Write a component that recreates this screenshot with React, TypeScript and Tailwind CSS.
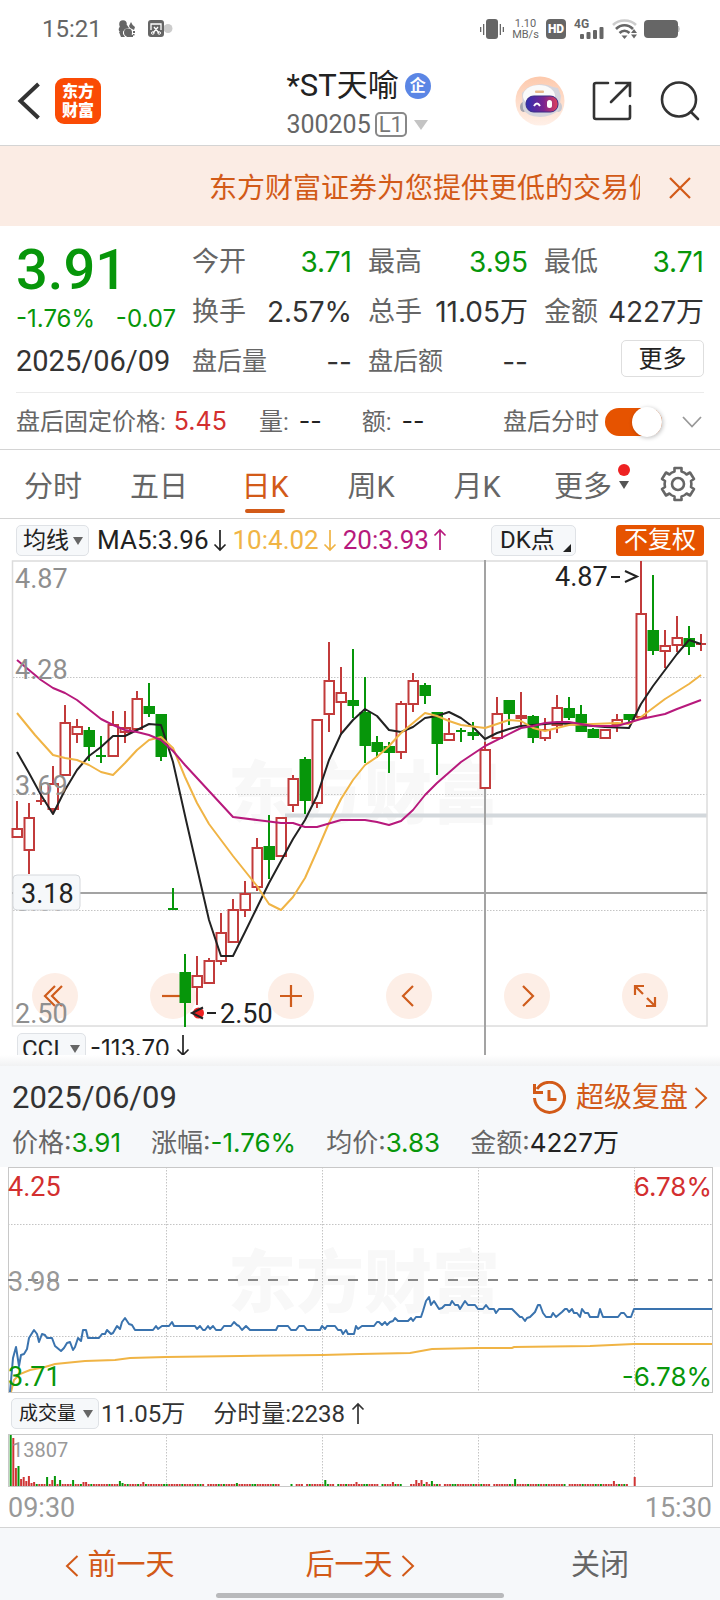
import { useState } from 'react';
import type { ReactNode } from 'react';

type Candle = [color: 'r' | 'g', high: number, top: number, bottom: number, low: number];

// One entry per trading day, in chart pixels (12px per day)
const CANDLES: Candle[] = [
  ['r', 241, 268, 278, 278], ['r', 243, 257, 291, 314], ['r', 225, 240, 242, 245], ['r', 206, 223, 250, 254],
  ['r', 145, 162, 216, 216], ['r', 159, 166, 175, 183], ['g', 167, 170, 187, 201], ['g', 176, 195, 197, 203],
  ['r', 151, 164, 197, 197], ['r', 151, 167, 173, 183], ['r', 131, 138, 170, 170], ['g', 123, 146, 154, 157],
  ['g', 154, 154, 197, 201], ['g', 328, 348, 350, 350], ['g', 394, 412, 443, 467], ['r', 396, 415, 428, 445],
  ['r', 398, 400, 424, 424], ['r', 353, 372, 402, 405], ['r', 339, 349, 383, 383], ['r', 321, 333, 351, 357],
  ['r', 278, 287, 328, 331], ['g', 255, 286, 300, 319], ['r', 257, 257, 297, 297], ['r', 215, 218, 246, 252],
  ['g', 197, 199, 241, 254], ['r', 159, 159, 244, 248], ['r', 82, 120, 155, 172], ['r', 107, 132, 143, 175],
  ['g', 89, 140, 146, 158], ['g', 117, 152, 186, 203], ['g', 176, 182, 192, 198], ['g', 182, 186, 193, 213],
  ['r', 141, 143, 193, 199], ['r', 113, 120, 145, 152], ['g', 123, 125, 136, 144], ['g', 152, 152, 184, 215],
  ['r', 158, 173, 181, 181], ['g', 168, 170, 172, 182], ['g', 162, 172, 176, 180], ['r', 182, 189, 229, 229],
  ['r', 137, 153, 179, 179], ['g', 140, 140, 154, 165], ['r', 132, 155, 159, 165], ['g', 155, 156, 178, 183],
  ['r', 158, 169, 179, 181], ['r', 135, 147, 166, 173], ['g', 137, 148, 158, 160], ['g', 145, 154, 172, 172],
  ['g', 168, 169, 178, 178], ['r', 169, 169, 179, 179], ['r', 154, 159, 165, 172], ['g', 154, 154, 160, 162],
  ['r', 1, 53, 158, 158], ['g', 15, 70, 91, 95], ['r', 70, 85, 92, 108], ['r', 56, 77, 86, 92],
  ['g', 66, 78, 87, 95], ['r', 74, 83, 85, 91],
];

const MA5 =
  '17,192 29,213 41,235 53,254 65,230 77,210 89,196 101,187 113,176 125,176 137,170 149,164 161,165 173,202 186,260 209,360 221,396 233,396 245,372 269,323 293,279 305,260 317,236 329,200 341,174 353,160 365,149 377,156 389,170 401,172 413,167 425,158 437,156 449,152 461,158 473,167 485,179 497,173 509,169 521,166 545,164 557,163 581,165 605,167 629,168 641,144 653,126 665,110 677,94 689,80 701,84';
const MA10 =
  '17,153 35,175 53,195 65,198 77,200 89,205 101,212 113,215 125,203 137,190 149,180 161,177 173,188 185,217 197,243 209,264 233,296 257,326 269,344 281,350 293,337 305,318 317,291 329,263 341,239 353,220 365,205 377,197 389,186 401,173 413,163 425,153 437,156 449,161 461,165 485,168 509,160 521,161 533,168 545,171 569,165 617,163 629,164 641,157 665,139 689,124 701,115';
const MA20 =
  '17,100 41,120 53,128 65,133 77,140 101,159 113,165 125,170 137,172 149,175 161,180 173,191 185,205 209,231 233,257 257,260 281,263 293,263 305,267 317,267 341,260 365,260 377,262 389,265 401,261 413,250 425,235 437,223 461,202 485,186 521,168 533,166 545,163 557,162 569,162 593,166 617,166 641,159 665,154 677,149 701,140';

const PRICE_LINE =
  '10,225 13,191 16,180 19,199 21,188 24,187 27,182 29,171 34,163 37,167 39,175 42,167 45,168 47,171 52,171 55,179 61,184 64,181 67,176 70,175 73,183 75,180 78,171 81,174 83,163 86,163 88,171 99,171 102,167 105,167 107,163 111,167 113,166 117,159 120,162 122,155 125,151 129,157 132,158 135,163 153,163 156,159 158,162 162,159 169,159 172,155 174,159 195,159 197,162 200,159 203,163 205,163 208,159 210,162 213,159 216,163 221,163 224,159 231,159 234,155 237,158 239,159 242,163 246,159 250,163 276,163 278,159 288,159 291,163 296,163 299,159 304,159 307,163 320,163 322,159 325,162 327,159 335,159 338,163 341,163 343,167 346,163 348,167 354,167 356,159 358,162 362,159 374,159 377,155 379,155 382,158 385,155 387,158 390,155 393,154 395,151 398,154 408,154 411,151 413,154 416,150 421,150 423,144 426,134 429,130 431,138 434,134 439,142 442,141 445,138 450,138 452,134 455,138 458,138 460,142 465,134 468,138 475,138 478,142 483,142 486,138 489,142 494,142 496,146 499,142 512,142 515,145 520,150 522,150 525,154 527,151 530,150 535,145 538,138 540,138 543,146 546,150 551,150 553,146 556,150 562,145 565,142 567,142 569,145 572,142 574,146 577,146 580,150 582,142 585,146 588,146 590,150 598,150 600,142 603,150 618,150 621,146 624,146 627,150 631,150 634,142 712,142';
const AVG_LINE =
  '11,225 14,213 20,207 30,203 45,200 55,197 85,194 115,193 130,191 166,190 240,189 322,188 360,187 410,186 432,182 478,181 512,181 514,180 590,179 634,177 712,177';

const VOLUME_PEAKS: Record<number, [number, 'r' | 'g']> = {
  0: [51, 'g'], 1: [48, 'r'], 2: [18, 'r'], 3: [20, 'g'], 4: [7, 'r'], 5: [9, 'r'], 6: [5, 'r'], 7: [10, 'r'],
  8: [3, 'r'], 9: [4, 'r'], 14: [9, 'g'], 16: [6, 'r'], 17: [10, 'g'], 19: [6, 'g'], 24: [6, 'g'], 28: [4, 'r'],
  29: [4, 'r'], 42: [5, 'g'], 43: [3, 'g'], 51: [4, 'r'], 87: [3, 'g'], 121: [6, 'g'], 133: [4, 'r'],
  147: [4, 'r'], 156: [6, 'r'], 157: [3, 'r'], 158: [6, 'r'], 160: [4, 'r'], 162: [5, 'g'], 194: [7, 'g'],
  232: [5, 'r'], 240: [9, 'r'],
};
const VOLUME_GAPS = [75, 104, 105, 106, 107, 109, 113, 125, 142, 151, 152, 153, 166, 185, 214, 238, 239];

const RED = '#c23b3b';
const GREEN = '#07960a';

function Arrow({ up = false, className = '' }: { up?: boolean; className?: string }) {
  return (
    <svg viewBox="0 0 14 24" className={`w-3.5 h-6 shrink-0 ${up ? 'rotate-180' : ''} ${className}`} fill="none" stroke="currentColor" strokeWidth="1.700">
      <path d="M7 2v20M1.500 16.500L7 22l5.500-5.500" />
    </svg>
  );
}

function Chevron({ left = false, className = '' }: { left?: boolean; className?: string }) {
  return (
    <svg viewBox="0 0 14 22" className={`w-3.5 h-[22px] shrink-0 ${className}`} fill="none" stroke="currentColor" strokeWidth="2">
      <path d={left ? 'M12.500 1L2 11l10.500 10' : 'M1.500 1L12 11L1.500 21'} />
    </svg>
  );
}

function Picker({ label, value, className }: { label: string; value: string; className: string }) {
  return (
    <label className="relative shrink-0">
      <span className="sr-only">{label}</span>
      <select className={`block h-[31px] rounded-[5px] border border-[#dfe2e6] bg-[#f6f8fa] text-[#222] appearance-none outline-none ${className}`}>
        <option>{value}</option>
      </select>
      <svg viewBox="0 0 10 8" className="absolute right-1.5 top-3 w-2.5 h-2 pointer-events-none">
        <path d="M0 0h10L5 8z" fill="#666" />
      </svg>
    </label>
  );
}

function StatusBar() {
  return (
    <div className="flex items-center h-[58px] pl-[42px] pr-[40px] text-[#666]">
      <span className="text-[24px] leading-none">15:21</span>
      <svg viewBox="0 0 18 18" className="ml-4 w-[18px] h-[18px]" fill="currentColor">
        <circle cx="5" cy="4" r="3.800" />
        <path d="M2 6l7-1l2 3l-4 1l-3 4l-3-2q-1-2 1-5z" />
        <path d="M11 6l2-4q1 3 4 5l-1 3l-4-2z" />
        <path d="M1 12l4-2v4l2 3H3z" />
        <circle cx="10" cy="12.500" r="4" />
        <path d="M8 17h7v-2l-3-1zM15 11h2v2h-2zM15 14h1.500v1.500H15z" />
      </svg>
      <svg viewBox="0 0 26 18" className="ml-3 w-[26px] h-[18px]">
        <circle cx="20" cy="8.500" r="4.500" fill="#ccc" />
        <rect width="16" height="17" rx="3" fill="currentColor" />
        <path d="M3 10V4h10v6M6 7l5 6M10 7l-5 6" fill="none" stroke="#fff" strokeWidth="1.300" />
        <circle cx="4.800" cy="13" r="1.300" fill="none" stroke="#fff" />
        <circle cx="11.200" cy="13" r="1.300" fill="none" stroke="#fff" />
      </svg>
      <div className="ml-auto flex items-center">
        <svg viewBox="0 0 24 20" className="w-6 h-5" fill="currentColor">
          <rect x="6" width="12" height="20" rx="3" />
          <path d="M0 8h1.300v5H0zM3 5h1.300v11H3zM19.700 5H21v11h-1.300zM22.700 8H24v5h-1.300z" />
        </svg>
        <div className="ml-2 w-[27px] text-center text-[11px] leading-[11px]">
          1.10
          <br />
          MB/s
        </div>
        <div className="ml-[7px] flex items-center justify-center w-5 h-5 rounded bg-[#666] text-white text-[12px] font-black">HD</div>
        <div className="relative ml-2 w-[30px] h-5">
          <span className="absolute left-0 top-0 text-[12px] leading-[10px] font-bold">4G</span>
          <svg viewBox="0 0 24 12" className="absolute right-0 bottom-0 w-6 h-3" fill="currentColor">
            <rect y="7" width="4" height="5" rx="1" />
            <rect x="6.500" y="5" width="4" height="7" rx="1" />
            <rect x="13" y="3" width="4" height="9" rx="1" />
            <rect x="19.500" y="0" width="4" height="12" rx="1" />
          </svg>
        </div>
        <svg viewBox="0 0 26 20" className="ml-2 w-[26px] h-5" fill="none" strokeWidth="2.600">
          <path d="M1 6C7 0 18 0 24 6" stroke="#ccc" />
          <path d="M4 10c5-5 12-5 17 0" stroke="currentColor" />
          <path d="M7.500 14c3-3 7-3 10 0" stroke="currentColor" />
          <path d="M9.500 16.500h6L12.500 20z" fill="currentColor" stroke="none" />
          <path d="M19 14h6l-3-4zM19 15.500h6l-3 4z" fill="currentColor" stroke="none" />
        </svg>
        <svg viewBox="0 0 36 18" className="ml-1.5 w-9 h-[18px]">
          <rect width="34" height="18" rx="4" fill="currentColor" />
          <path d="M34.500 6q1.500 3 0 6z" fill="#bbb" stroke="#bbb" />
        </svg>
      </div>
    </div>
  );
}

function Header() {
  return (
    <header className="flex items-center h-[88px] pl-[17px] pr-5 pb-0.5 border-b border-[#d4d4d4]">
      <div className="flex flex-1 items-center">
        <button aria-label="返回">
          <svg viewBox="0 0 24 38" className="w-6 h-[38px]" fill="none" stroke="#333" strokeWidth="4">
            <path d="M21.500 2L3.500 19l18 17" />
          </svg>
        </button>
        <div className="ml-3.5 grid place-content-center size-[46px] rounded-[9px] bg-[#fa4b05] text-white text-center text-[16px] leading-[19px] font-black">
          东方
          <br />
          财富
        </div>
      </div>
      <div className="flex flex-col items-start pt-2.5">
        <h1 className="flex items-center gap-1.5 text-[31px] leading-[38px] text-[#222]">
          *ST天喻
          <span className="grid place-content-center size-[26px] rounded-full bg-[#5b86e5] text-white text-[16px] leading-none font-bold">企</span>
        </h1>
        <button className="flex items-center text-[25px] leading-10 text-[#666]">
          300205
          <span className="ml-1 px-0.5 h-[25px] border-2 border-[#888] rounded-[5px] text-[22px] leading-[22px] text-[#777]">L1</span>
          <svg viewBox="0 0 14 10" className="ml-[7px] w-3.5 h-2.5">
            <path d="M0 0h14L7 10z" fill="#c4c4c4" />
          </svg>
        </button>
      </div>
      <div className="flex flex-1 items-center justify-end">
        <button aria-label="智能助手">
          <svg viewBox="0 0 50 50" className="size-[50px]">
            <defs>
              <linearGradient id="halo" x1="0" y1="0" x2="0" y2="1">
                <stop offset="0" stopColor="#fdc9ac" />
                <stop offset="1" stopColor="#fff0e8" />
              </linearGradient>
              <linearGradient id="visor">
                <stop offset="0" stopColor="#2f2fb0" />
                <stop offset="0.550" stopColor="#7a2490" />
                <stop offset="1" stopColor="#e0405a" />
              </linearGradient>
            </defs>
            <circle cx="25" cy="25" r="24.500" fill="url(#halo)" />
            <ellipse cx="8.500" cy="31" rx="3.500" ry="5" fill="#a3a3ae" />
            <ellipse cx="43.500" cy="31" rx="3.500" ry="5" fill="#c9c9d2" />
            <path d="M7 17l5-5q14-7 26-1l5 1l3 8l-2 14q-8 7-19 7Q11 40 8 33z" fill="#d5d5dd" />
            <ellipse cx="24" cy="20" rx="16" ry="11" fill="#fafafa" />
            <rect x="11" y="20" width="32" height="16" rx="7.500" fill="url(#visor)" stroke="#3b2c86" />
            <path d="M19 30q3-5 6 0" fill="none" stroke="#fff" strokeWidth="2" />
            <rect x="32" y="24" width="5" height="8" rx="2.500" fill="#fff" />
            <rect x="20" y="14.500" width="9" height="2.500" rx="1" fill="#e8b88c" />
          </svg>
        </button>
        <button aria-label="分享" className="ml-[27px]">
          <svg viewBox="0 0 40 40" className="size-10" fill="none" stroke="#333" strokeWidth="2.600" strokeLinecap="round">
            <path d="M16 2H4Q2 2 2 4v32q0 2 2 2h32q2 0 2-2V25M24 2h14v13M37 3L19 21" />
          </svg>
        </button>
        <button aria-label="搜索" className="ml-7">
          <svg viewBox="0 0 40 40" className="size-10" fill="none" stroke="#333" strokeWidth="2.600" strokeLinecap="round">
            <circle cx="19" cy="18.500" r="17" />
            <path d="M31 31l7 7" />
          </svg>
        </button>
      </div>
    </header>
  );
}

function Stat({ label, value, green = false, long = false }: { label: string; value: string; green?: boolean; long?: boolean }) {
  return (
    <div className="flex items-center justify-between h-[50px] pt-0.5 whitespace-nowrap">
      <span className={`text-[#666] ${long ? 'text-[25px]' : 'text-[27px]'}`}>{label}</span>
      <span className={`text-[28px] font-[Inter,'Noto_Sans_CJK_SC',sans-serif] ${green ? 'text-[#07960a]' : 'text-[#333]'}`}>{value}</span>
    </div>
  );
}

function Quote() {
  const [afterHours, setAfterHours] = useState(true);
  return (
    <section className="border-b border-[#d4d4d4]">
      <div className="mx-4 pt-2.5 pb-1 grid grid-cols-[160px_1fr_1fr_1fr] gap-x-4 border-b border-[#ebebeb]">
        <div className="flex flex-col">
          <span className="h-[68px] text-[56px] leading-[68px] font-medium text-[#07960a]">3.91</span>
          <span className="flex justify-between h-7 text-[24px] leading-[30px] font-[Inter] text-[#07960a]">
            <span>-1.76%</span>
            <span>-0.07</span>
          </span>
          <span className="h-14 text-[29px] leading-[58px] text-[#333]">2025/06/09</span>
        </div>
        <div>
          <Stat label="今开" value="3.71" green />
          <Stat label="换手" value="2.57%" />
          <Stat label="盘后量" value="--" long />
        </div>
        <div>
          <Stat label="最高" value="3.95" green />
          <Stat label="总手" value="11.05万" />
          <Stat label="盘后额" value="--" long />
        </div>
        <div>
          <Stat label="最低" value="3.71" green />
          <Stat label="金额" value="4227万" />
          <button className="block ml-auto mt-1 w-[83px] h-[37px] rounded-[5px] border border-[#dedede] text-[24px] leading-[34px] text-[#222]">更多</button>
        </div>
      </div>
      <div className="flex items-center h-14 pt-0.5 px-4 text-[24px] text-[#666] whitespace-nowrap">
        盘后固定价格:<span className="ml-2 text-[25px] font-[Inter] text-[#d32f2f]">5.45</span>
        <span className="ml-8">量:</span>
        <span className="ml-2.5 text-[25px] font-[Inter] text-[#222]">--</span>
        <span className="ml-10">额:</span>
        <span className="ml-2.5 text-[25px] font-[Inter] text-[#222]">--</span>
        <label className="ml-auto flex items-center gap-1.5">
          盘后分时
          <input
            type="checkbox"
            checked={afterHours}
            onChange={(e) => setAfterHours(e.target.checked)}
            className="relative w-[57px] h-7 rounded-full appearance-none bg-[#ccc] checked:bg-[#e65300] before:absolute before:-top-px before:-left-px checked:before:left-[27px] before:size-[30px] before:rounded-full before:bg-white before:shadow-[1px_1px_4px_rgba(0,0,0,0.25)]"
          />
        </label>
        <button aria-label="展开" className="ml-5 mr-0.5">
          <svg viewBox="0 0 20 12" className="w-5 h-3" fill="none" stroke="#999" strokeWidth="1.800">
            <path d="M1 1l9 9.500L19 1" />
          </svg>
        </button>
      </div>
    </section>
  );
}

const TABS = ['分时', '五日', '日K', '周K', '月K', '更多'];

function PeriodTabs() {
  const [active, setActive] = useState('日K');
  return (
    <nav className="flex h-[69px] border-b border-[#d4d4d4] text-[29px] text-[#666]">
      {TABS.map((tab) => (
        <button key={tab} onClick={() => setActive(tab)} className={`relative flex-1 pt-2 ${tab === active ? 'text-[#d25a18]' : ''}`}>
          {tab}
          {tab === active && <span className="absolute left-1/2 bottom-[5px] -ml-5 w-10 h-1 rounded-full bg-[#d25a18]" />}
          {tab === '更多' && (
            <svg viewBox="0 0 12 26" className="absolute right-1.5 top-3.5 w-3 h-[26px]">
              <circle cx="6" cy="6" r="6" fill="#ee2222" />
              <path d="M1 17h10l-5 8z" fill="#555" />
            </svg>
          )}
        </button>
      ))}
      <button aria-label="设置" className="grid place-content-center w-[84px]">
        <svg viewBox="0 0 36 36" className="size-9" fill="none" stroke="#666" strokeWidth="2.600" strokeLinejoin="round">
          <path d="M14.500 2h7v3.500q3.500 1 5 3L30 6.500l4 6.500l-3 2q.800 3 0 6l3 2l-4 6.500l-3.500-2q-2 2.300-5 3V34h-7v-3.500q-3-.7-5-3l-3.500 2L2 23l3-2q-.8-3 0-6l-3-2l4-6.500l3.500 2q1.500-2 5-3z" />
          <circle cx="18" cy="18" r="6" />
        </svg>
      </button>
    </nav>
  );
}

function ZoomButton({ label, children }: { label: string; children: ReactNode }) {
  return (
    <button aria-label={label} className="size-[46px] rounded-full bg-[#fdeee6]">
      <svg viewBox="0 0 46 46" className="size-[46px]" fill="none" stroke="#cf5c1c" strokeWidth="2.200">
        {children}
      </svg>
    </button>
  );
}

function KLineChart() {
  return (
    <section>
      <div className="flex items-center h-[41px] px-4 pt-px text-[26px] whitespace-nowrap">
        <Picker label="主图指标" value="均线" className="w-[73px] pl-1.5 text-[23px] leading-[27px]" />
        <span className="ml-2 text-[#222]">MA5:3.96</span>
        <Arrow className="ml-1 text-[#222]" />
        <span className="ml-1.5 text-[#f0b445]">10:4.02</span>
        <Arrow className="ml-1 text-[#f0b445]" />
        <span className="ml-1.5 text-[#b7197c]">20:3.93</span>
        <Arrow up className="ml-1 text-[#b7197c]" />
        <button className="relative ml-auto w-[85px] h-[31px] pl-2 rounded-[5px] border border-[#dfe2e6] bg-[#f6f8fa] text-left text-[24px] leading-[28px] text-[#222]">
          DK点
          <svg viewBox="0 0 8 8" className="absolute right-1 bottom-[3px] size-2">
            <path d="M8 0v8H0z" fill="#222" />
          </svg>
        </button>
        <button className="ml-10 w-[88px] h-[31px] rounded-[4px] bg-[#e65300] text-white text-[24px] leading-[30px]">不复权</button>
      </div>

      <div className="relative">
        <div className="absolute left-8 right-[52px] bottom-[9px] flex justify-between">
          <ZoomButton label="最早">
            <path d="M23 13L13 23l10 10M30 13L20 23l10 10" />
          </ZoomButton>
          <ZoomButton label="缩小">
            <path d="M12 23h22" />
          </ZoomButton>
          <ZoomButton label="放大">
            <path d="M12 23h22M23 12v22" />
          </ZoomButton>
          <ZoomButton label="左移">
            <path d="M27 13L17 23l10 10" />
          </ZoomButton>
          <ZoomButton label="右移">
            <path d="M19 13l10 10l-10 10" />
          </ZoomButton>
          <ZoomButton label="全屏">
            <path d="M21 21l-8-8M13 22v-9h9M25 25l8 8M33 24v9h-9" />
          </ZoomButton>
        </div>
        <svg viewBox="0 0 720 468" className="relative block w-full overflow-visible pointer-events-none" fontFamily="Roboto, 'Noto Sans CJK SC', sans-serif" fontSize="27">
          <text x="228" y="258" fontSize="68" fontWeight="900" fill="#f8f8f8">东方财富</text>
          <path d="M13 117.500h694M13 234.500h694M13 350.500h694" stroke="#c4c4c4" strokeDasharray="1.500 1.500" />
          <path d="M285 255.500h422" stroke="#d3d8dc" strokeWidth="4" />
          <rect x="12.500" y="1" width="694.500" height="465" fill="none" stroke="#dcdcdc" strokeWidth="1.500" />
          <path d="M12 333h695M485 0v495" stroke="#a3a3a3" strokeWidth="2" />
          {CANDLES.map(([color, high, top, bottom, low], i) => {
            const x = 17 + i * 12;
            const stroke = color === 'r' ? RED : GREEN;
            const flat = bottom - top < 3;
            return (
              <g key={i} stroke={stroke} strokeWidth="2">
                <path d={`M${x} ${high}V${top}M${x} ${bottom}V${low}`} />
                {flat ? (
                  <path d={`M${x - 5} ${top + 1}h10`} />
                ) : (
                  <rect x={x - 4.5} y={top + 1} width="9.500" height={bottom - top - 2} fill={color === 'r' ? '#fff' : stroke} />
                )}
              </g>
            );
          })}
          <g fill="none" strokeWidth="2" strokeLinejoin="round">
            <polyline points={MA5} stroke="#222" />
            <polyline points={MA10} stroke="#f0b445" />
            <polyline points={MA20} stroke="#b7197c" />
          </g>
          <g fill="#8f8f8f">
            <text x="15" y="28">4.87</text>
            <text x="15" y="119">4.28</text>
            <text x="15" y="235">3.69</text>
            <text x="15" y="351">3.09</text>
            <text x="15" y="463">2.50</text>
          </g>
          <rect x="13" y="315" width="67" height="35" rx="4" fill="#f6f8fa" stroke="#d5d8dc" />
          <text x="21" y="343" fill="#222">3.18</text>
          <g fill="#222">
            <text x="555" y="26">4.87</text>
            <circle cx="198.500" cy="453" r="5.500" fill="#ee2222" />
            <text x="220" y="463">2.50</text>
            <path d="M611 17h9M625 11l12 5.500l-12 5.500M207 453h9M203 447.500l-11 5.500l11 5.500" fill="none" stroke="#222" strokeWidth="2" />
          </g>
        </svg>
      </div>
      <div className="flex h-[27px] pt-[5px] px-[17px] overflow-hidden text-[24px] leading-[31px] text-[#222]">
        <Picker label="副图指标" value="CCI" className="w-[69px] pl-1 text-[24px] leading-[30px]" />
        <span className="ml-1 font-[Inter]">-113.70</span>
        <Arrow className="ml-1.5" />
      </div>
    </section>
  );
}

function Intraday() {
  return (
    <section className="flex-1">
      <div className="h-[11px] bg-gradient-to-b from-white to-[#f1f2f3]" />
      <div className="h-[101px] px-3 pt-[9px] bg-[#f6f8fa] whitespace-nowrap">
        <div className="flex items-center justify-between h-[46px]">
          <span className="text-[31px] text-[#333]">2025/06/09</span>
          <button className="flex items-center text-[28px] text-[#d25a18]">
            <svg viewBox="0 0 34 34" className="mr-2.5 size-[34px]" fill="none" stroke="currentColor" strokeWidth="3">
              <path d="M5 8A15 15 0 1 1 2.500 17M2.500 3v8.500h8.500M17 9v9.500h7.500" />
            </svg>
            超级复盘
            <Chevron className="ml-1.5" />
          </button>
        </div>
        <div className="flex gap-[30px] h-11 text-[26px] leading-[44px] font-[Inter,'Noto_Sans_CJK_SC',sans-serif] text-[#666]">
          <span>价格:<span className="text-[#07960a]">3.91</span></span>
          <span>涨幅:<span className="text-[#07960a]">-1.76%</span></span>
          <span>均价:<span className="text-[#07960a]">3.83</span></span>
          <span>金额:<span className="text-[#222]">4227万</span></span>
        </div>
      </div>

      <svg viewBox="0 0 720 226" className="block w-full" fontFamily="Roboto, 'Noto Sans CJK SC', sans-serif" fontSize="27">
        <text x="228" y="140" fontSize="68" fontWeight="900" fill="#f8f8f8">东方财富</text>
        <path d="M8 57.500h704M8 169.500h704M166.500 0v225M322.500 0v225M478.500 0v225M634.500 0v225" stroke="#c4c4c4" strokeDasharray="1.500 1.500" />
        <rect x="8.500" y="0.500" width="704" height="225" fill="none" stroke="#c8c8c8" />
        <path d="M8 113h704" stroke="#888" strokeWidth="2" strokeDasharray="10 10" />
        <polyline points={AVG_LINE} fill="none" stroke="#f0b445" strokeWidth="2" />
        <polyline points={PRICE_LINE} fill="none" stroke="#3a73ae" strokeWidth="2" strokeLinejoin="round" />
        <text x="8" y="29" fill="#d32f2f">4.25</text>
        <text x="8" y="124" fill="#999">3.98</text>
        <text x="8" y="219" fill="#07960a">3.71</text>
        <text x="712" y="29" textAnchor="end" fontFamily="Inter" fontSize="26" fill="#d32f2f">6.78%</text>
        <text x="712" y="219" textAnchor="end" fontFamily="Inter" fontSize="26" fill="#07960a">-6.78%</text>
      </svg>

      <div className="flex items-center h-[41px] px-[11px] text-[24px] text-[#333] whitespace-nowrap">
        <Picker label="成交指标" value="成交量" className="w-[88px] pl-[7px] text-[19px] leading-[27px]" />
        <span className="ml-0.5">11.05万</span>
        <span className="ml-7">分时量:2238</span>
        <Arrow up className="ml-1.5" />
      </div>

      <svg viewBox="0 0 720 53" className="block w-full">
        <path d="M166.500 0v52M322.500 0v52M478.500 0v52M634.500 0v52" stroke="#c4c4c4" strokeDasharray="1.500 1.500" />
        <rect x="8.500" y="0.500" width="704" height="52" fill="none" stroke="#c8c8c8" />
        {Array.from({ length: 241 }, (_, i) => {
          if (VOLUME_GAPS.includes(i)) return null;
          const [h, c] = VOLUME_PEAKS[i] ?? [2, i % 7 === 3 || i % 11 === 5 ? 'g' : 'r'];
          return <rect key={i} x={9.7 + i * 2.6} y={52 - h} width="2" height={h} fill={c === 'r' ? '#cf3535' : GREEN} />;
        })}
        <text x="12" y="23" fontFamily="Roboto, sans-serif" fontSize="20" fill="#999">13807</text>
      </svg>
      <div className="flex justify-between h-10 px-2 text-[27px] leading-[42px] text-[#999]">
        <span>09:30</span>
        <span>15:30</span>
      </div>
    </section>
  );
}

export default function App() {
  const [showBanner, setShowBanner] = useState(true);
  return (
    <div className="flex flex-col min-h-screen overflow-x-hidden bg-white font-[Roboto,'Noto_Sans_CJK_SC',sans-serif]">
      <StatusBar />
      <Header />
      {showBanner && (
        <div className="flex items-center h-20 pl-[209px] pr-7 pt-1 bg-[#fbece4] text-[28px] text-[#d25a18]">
          <p className="flex-1 min-w-0 pt-0.5 overflow-hidden whitespace-nowrap">东方财富证券为您提供更低的交易佣金</p>
          <button aria-label="关闭广告" onClick={() => setShowBanner(false)} className="ml-7">
            <svg viewBox="0 0 24 24" className="size-6" fill="none" stroke="currentColor" strokeWidth="2.200">
              <path d="M2 2l20 20M22 2L2 22" />
            </svg>
          </button>
        </div>
      )}
      <Quote />
      <PeriodTabs />
      <KLineChart />
      <Intraday />
      <footer className="relative grid grid-cols-3 h-[73px] pt-1 border-t border-[#d4d4d4] bg-[#f6f8fa] text-[29px]">
        <button className="flex items-center justify-center gap-2 text-[#d25a18]">
          <Chevron left />
          前一天
        </button>
        <button className="flex items-center justify-center gap-2 text-[#d25a18]">
          后一天
          <Chevron />
        </button>
        <button className="text-[#666]">关闭</button>
        <span className="absolute left-[30%] right-[30%] bottom-0.5 h-[5px] rounded-full bg-[#b8b9bb]" />
      </footer>
    </div>
  );
}
